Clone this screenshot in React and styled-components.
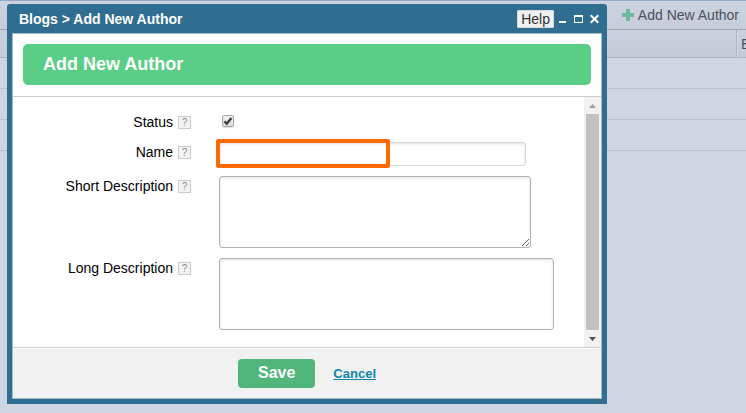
import React from 'react';
import styled, { createGlobalStyle, css } from 'styled-components';

const GlobalStyle = createGlobalStyle`
  *, *::before, *::after {
    box-sizing: border-box;
  }
  body {
    margin: 0;
    overflow: hidden;
    background: #cfd5e2;
    font-family: 'Liberation Sans', Arial, sans-serif;
    font-size: 14px;
    line-height: 20px;
    color: #000;
  }
  button, input, textarea {
    font: inherit;
    margin: 0;
  }
`;

const StyledPage = styled.main`
  position: relative;
  min-height: 100vh;
  overflow: hidden;
  border-top: 1px solid #94a8ca;
`;

const StyledToolbar = styled.header`
  display: flex;
  justify-content: flex-end;
  align-items: center;
  height: 29px;
  padding-right: 7px;
  border-bottom: 1px solid #a1a8b5;
  background: linear-gradient(#ced3e0, #c6ccd9);
`;

const StyledAddButton = styled.button`
  display: flex;
  align-items: center;
  gap: 4px;
  padding: 0;
  border: 0;
  background: none;
  color: #4c505c;
`;

const StyledTable = styled.table`
  width: 100%;
  table-layout: fixed;
  border-collapse: separate;
  border-spacing: 0;
`;

const StyledHeadCell = styled.th`
  height: 28px;
  padding: 0 0 0 3px;
  border-bottom: 1px solid #adb4c1;
  background: linear-gradient(#cad0dc, #c4cad7);
  color: #4c505c;
  font-weight: normal;
  text-align: left;
  ${({ $narrow }) =>
    $narrow
      ? css`
          width: 9px;
          border-left: 1px solid #d6dbe5;
        `
      : css`
          border-right: 1px solid #adb4c1;
        `}
`;

const StyledCell = styled.td`
  height: 31px;
  padding: 0;
  border-bottom: 1px solid #bac1ce;
`;

const StyledDialog = styled.section`
  position: absolute;
  top: 3px;
  left: 7px;
  width: min(600px, calc(100% - 14px));
  padding: 0 5px 5px;
  border-radius: 3px 3px 0 0;
  background: #2f6e91;
`;

const StyledTitleBar = styled.div`
  display: flex;
  align-items: center;
  height: 29px;
  padding-left: 7px;
  color: #fff;
`;

const StyledTitle = styled.h1`
  flex: 1;
  margin: 0;
  font-size: 14px;
`;

const StyledHelpButton = styled.button`
  height: 18px;
  padding: 0 3px;
  border: 1px solid #d5dadd;
  border-radius: 1px;
  background: #f0f0f0;
  color: #333;
  line-height: 16px;
`;

const StyledWindowButton = styled.button`
  display: flex;
  padding: 0 3px 0 4px;
  border: 0;
  background: none;
  color: #fff;
`;

const StyledBody = styled.div`
  border: 1px solid #a3bccd;
  background: #fff;
`;

const StyledBannerArea = styled.div`
  padding: 10px 10px 11px;
  border-bottom: 1px solid #ccc;
`;

const StyledBanner = styled.h2`
  margin: 0;
  padding: 0 20px;
  border-radius: 5px;
  background: #5acd86;
  color: #fff;
  font-size: 18px;
  line-height: 41px;
`;

const StyledContent = styled.div`
  display: flex;
`;

const StyledForm = styled.form`
  flex: 1;
  min-width: 0;
  display: flex;
  flex-direction: column;
  gap: 10px;
  padding: 15px 30px 17px 0;
`;

const StyledRow = styled.div`
  display: grid;
  grid-template-columns: 178px 1fr;
  column-gap: 28px;
`;

const StyledLabelGroup = styled.div`
  display: flex;
  justify-content: flex-end;
  align-items: center;
  gap: 5px;
  height: 20px;
`;

const StyledHint = styled.button`
  width: 13px;
  height: 13px;
  padding: 0;
  border: 1px solid #ccc;
  background: #f3f3f3;
  color: #8c8c8c;
  font-size: 10px;
  line-height: 11px;
`;

const StyledField = styled.div`
  position: relative;
  display: flex;
`;

const StyledCheck = styled.span`
  position: relative;
  display: flex;
  margin: 3px;
  height: 12px;

  svg {
    position: absolute;
    inset: 0;
    pointer-events: none;
  }
  input:not(:checked) + svg {
    display: none;
  }
`;

const StyledCheckbox = styled.input`
  appearance: none;
  width: 12px;
  height: 12px;
  border: 1px solid #a6a6a6;
  border-radius: 2px;
  background: linear-gradient(#f0f0f0, #dcdcdc);
  box-shadow: 0 1px 1px rgba(0, 0, 0, 0.12);
`;

const fieldBox = css`
  display: block;
  padding: 2px 4px;
  border-radius: 3px;
  outline: 0;
  background: #fff;
  box-shadow: inset 0 1px 3px rgba(0, 0, 0, 0.12);
`;

const StyledInput = styled.input`
  ${fieldBox}
  width: 307px;
  max-width: 100%;
  height: 24px;
  border: 1px solid #d8d8d8;
`;

const StyledTextArea = styled.textarea`
  ${fieldBox}
  width: ${({ $wide }) => ($wide ? '335px' : '312px')};
  max-width: 100%;
  height: 72px;
  border: 1px solid #b3b3b3;
  resize: ${({ $wide }) => ($wide ? 'none' : 'both')};
`;

const StyledHighlight = styled.span`
  position: absolute;
  top: -3px;
  left: -3px;
  width: 174px;
  height: 29px;
  border: 4px solid #ff6a00;
  border-radius: 2px;
  pointer-events: none;
`;

const StyledScrollbar = styled.div`
  display: flex;
  flex-direction: column;
  width: 17px;
  background: #f1f1f1;
`;

const StyledScrollButton = styled.button`
  display: flex;
  justify-content: center;
  align-items: center;
  height: 17px;
  padding: 0;
  border: 0;
  background: none;
  color: ${({ $dim }) => ($dim ? '#a3a3a3' : '#505050')};
`;

const StyledThumb = styled.div`
  flex: 1;
  margin: 0 2px;
  background: #c1c1c1;
`;

const StyledFooter = styled.footer`
  display: flex;
  justify-content: center;
  align-items: center;
  gap: 18px;
  height: 51px;
  border-top: 1px solid #ccc;
  background: #f1f1f1;
  box-shadow: inset 0 1px 0 #fff;
`;

const StyledSave = styled.button`
  height: 29px;
  padding: 0 20px;
  border: 0;
  border-radius: 4px;
  background: #50b67a;
  color: #fff;
  font-size: 16px;
  font-weight: bold;
`;

const StyledCancel = styled.a`
  padding-top: 2px;
  color: #0e87a9;
  font-size: 13px;
  font-weight: bold;
`;

const FormRow = ({ id, label, children }) => (
  <StyledRow>
    <StyledLabelGroup>
      <label htmlFor={id}>{label}</label>
      <StyledHint type="button">?</StyledHint>
    </StyledLabelGroup>
    <StyledField>{children}</StyledField>
  </StyledRow>
);

const AuthorTable = () => (
  <StyledTable>
    <thead>
      <tr>
        <StyledHeadCell />
        <StyledHeadCell $narrow>E</StyledHeadCell>
      </tr>
    </thead>
    <tbody>
      {[1, 2, 3].map((row) => (
        <tr key={row}>
          <StyledCell colSpan={2} />
        </tr>
      ))}
    </tbody>
  </StyledTable>
);

const WindowControls = () => (
  <>
    <StyledWindowButton type="button">
      <svg width="9" height="10" viewBox="0 0 9 10">
        <path d="M1 7h7v2H1z" fill="currentColor" />
      </svg>
    </StyledWindowButton>
    <StyledWindowButton type="button">
      <svg width="9" height="10" viewBox="0 0 9 10" shapeRendering="crispEdges">
        <path d="M0 1h9v8H0zM1 3v5h7V3z" fill="currentColor" fillRule="evenodd" />
      </svg>
    </StyledWindowButton>
    <StyledWindowButton type="button">
      <svg width="9" height="10" viewBox="0 0 9 10">
        <path d="M0.7 1.2l7.6 7.6M8.3 1.2L0.7 8.8" stroke="currentColor" strokeWidth="2" />
      </svg>
    </StyledWindowButton>
  </>
);

const Scrollbar = () => (
  <StyledScrollbar>
    <StyledScrollButton type="button" $dim>
      <svg width="7" height="4" viewBox="0 0 7 4">
        <path d="M0 4L3.5 0L7 4z" fill="currentColor" />
      </svg>
    </StyledScrollButton>
    <StyledThumb />
    <StyledScrollButton type="button">
      <svg width="7" height="4" viewBox="0 0 7 4">
        <path d="M0 0h7L3.5 4z" fill="currentColor" />
      </svg>
    </StyledScrollButton>
  </StyledScrollbar>
);

const AuthorForm = () => (
  <StyledForm id="author-form" onSubmit={(e) => e.preventDefault()}>
    <FormRow id="status" label="Status">
      <StyledCheck>
        <StyledCheckbox id="status" type="checkbox" defaultChecked />
        <svg width="12" height="12" viewBox="0 0 12 12">
          <path d="M2.5 6.2l2.3 2.5L9.4 3" fill="none" stroke="#404040" strokeWidth="2.4" />
        </svg>
      </StyledCheck>
    </FormRow>
    <FormRow id="name" label="Name">
      <StyledInput id="name" type="text" />
      <StyledHighlight />
    </FormRow>
    <FormRow id="short" label="Short Description">
      <StyledTextArea id="short" />
    </FormRow>
    <FormRow id="long" label="Long Description">
      <StyledTextArea id="long" $wide />
    </FormRow>
  </StyledForm>
);

const App = () => (
  <>
    <GlobalStyle />
    <StyledPage>
      <StyledToolbar>
        <StyledAddButton type="button">
          <svg width="12" height="12" viewBox="0 0 12 12">
            <path d="M4 0h4v4h4v4H8v4H4V8H0V4h4z" fill="#6fb99b" />
          </svg>
          Add New Author
        </StyledAddButton>
      </StyledToolbar>
      <AuthorTable />
      <StyledDialog role="dialog">
        <StyledTitleBar>
          <StyledTitle>Blogs &gt; Add New Author</StyledTitle>
          <StyledHelpButton type="button">Help</StyledHelpButton>
          <WindowControls />
        </StyledTitleBar>
        <StyledBody>
          <StyledBannerArea>
            <StyledBanner>Add New Author</StyledBanner>
          </StyledBannerArea>
          <StyledContent>
            <AuthorForm />
            <Scrollbar />
          </StyledContent>
          <StyledFooter>
            <StyledSave type="submit" form="author-form">
              Save
            </StyledSave>
            <StyledCancel href="#cancel">Cancel</StyledCancel>
          </StyledFooter>
        </StyledBody>
      </StyledDialog>
    </StyledPage>
  </>
);

export default App;
